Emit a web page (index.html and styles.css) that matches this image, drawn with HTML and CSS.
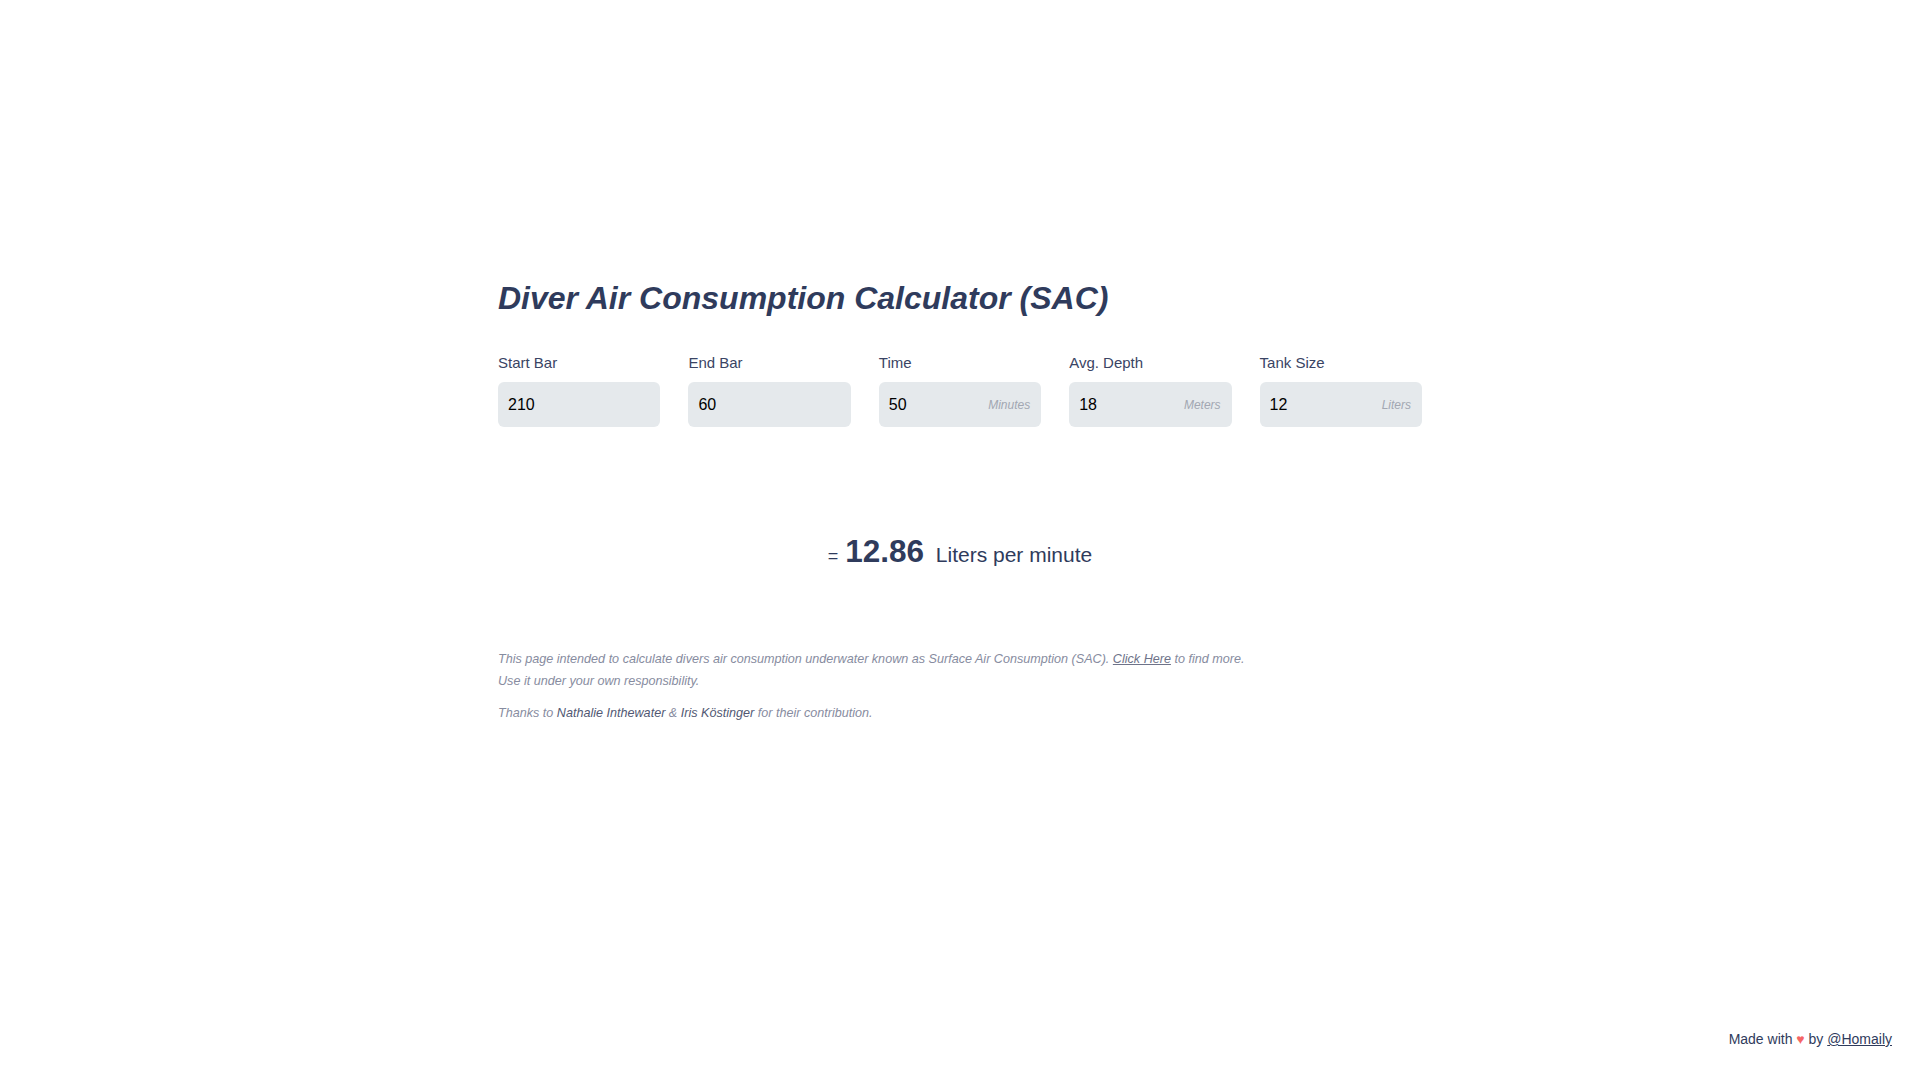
FILE: index.html
```html
<!DOCTYPE html>
<html lang="en">
<head>
    <meta charset="UTF-8">
    <meta name="viewport" content="width=device-width, initial-scale=1.0">
    <title>Diver Air Consumption Calculator (SAC)</title>
    <link rel="stylesheet" href="styles.css">
</head>
<body>
    <div class="page">
        <main class="layout-container">
            <h1 class="title">Diver Air Consumption Calculator (SAC)</h1>

            <div class="fields">
                <div class="field">
                    <label for="start-bar">Start Bar</label>
                    <div class="field-box">
                        <input type="text" inputmode="numeric" class="calc-input" id="start-bar" value="210">
                    </div>
                </div>

                <div class="field">
                    <label for="end-bar">End Bar</label>
                    <div class="field-box">
                        <input type="text" inputmode="numeric" class="calc-input" id="end-bar" value="60">
                    </div>
                </div>

                <div class="field">
                    <label for="time">Time</label>
                    <div class="field-box">
                        <input type="text" inputmode="numeric" class="calc-input" id="time" value="50">
                        <span class="unit">Minutes</span>
                    </div>
                </div>

                <div class="field">
                    <label for="depth">Avg. Depth</label>
                    <div class="field-box">
                        <input type="text" inputmode="numeric" class="calc-input" id="depth" value="18">
                        <span class="unit">Meters</span>
                    </div>
                </div>

                <div class="field">
                    <label for="tank">Tank Size</label>
                    <div class="field-box">
                        <input type="text" inputmode="numeric" class="calc-input" id="tank" value="12">
                        <span class="unit">Liters</span>
                    </div>
                </div>
            </div>

            <div class="result">
                <span class="result-eq">=</span>
                <span class="result-value" id="result">12.86</span>
                <span class="result-unit">Liters per minute</span>
            </div>

            <div class="notes">
                <p>This page intended to calculate divers air consumption underwater known as Surface Air Consumption (SAC). <a href="#">Click Here</a> to find more.<br>Use it under your own responsibility.</p>
                <p>Thanks to <b>Nathalie Inthewater</b> &amp; <b>Iris Köstinger</b> for their contribution.</p>
            </div>
        </main>

        <footer class="footer">
            Made with <span class="heart">&#9829;</span> by <a href="#">@Homaily</a>
        </footer>
    </div>

    <script>
        const resultEl = document.getElementById('result');

        function calculate() {
            let get = id => parseFloat(document.getElementById(id).value);
            let start = get('start-bar');
            let end = get('end-bar');
            let time = get('time');
            let depth = get('depth');
            let tank = get('tank');

            let sac = ((start - end) * tank / time) / (depth / 10 + 1);
            resultEl.innerText = isFinite(sac) ? sac.toFixed(2) : '0';
        }

        for (const input of document.querySelectorAll('.calc-input')) {
            input.oninput = calculate;
        }

        calculate();
    </script>
</body>
</html>
```

FILE: styles.css
```css
* {
    box-sizing: border-box;
}

body {
    margin: 0;
    font-family: "Liberation Sans", Arial, sans-serif;
    color: #2e3a59;
    background: #fff;
}

.page {
    min-height: 100vh;
    display: flex;
    flex-direction: column;
}

.layout-container {
    flex: 1;
    width: 924px;
    margin: 0 auto;
    padding-top: 278px;
}

.title {
    margin: 0;
    font-size: 32px;
    line-height: 40px;
    font-weight: bold;
    font-style: italic;
    color: #2f3b5c;
}

.fields {
    display: grid;
    grid-template-columns: repeat(5, minmax(0, 1fr));
    gap: 28px;
    margin-top: 35px;
}

.field {
    min-width: 0;
}

.field label {
    display: block;
    font-size: 15px;
    line-height: 20px;
    color: #3a4464;
    margin-bottom: 9px;
}

.field-box {
    display: flex;
    align-items: center;
    height: 45px;
    padding: 0 11px 0 10px;
    border-radius: 6px;
    background: #e5e9ec;
}

.calc-input {
    flex: 1;
    width: 100%;
    min-width: 0;
    border: none;
    outline: none;
    background: transparent;
    padding: 0;
    font-family: "Liberation Sans", Arial, sans-serif;
    font-size: 16px;
    color: #000;
}

.unit {
    flex-shrink: 0;
    font-size: 12px;
    font-style: italic;
    color: #a2a7b2;
}

.result {
    margin-top: 108px;
    text-align: center;
    font-size: 21px;
    line-height: 40px;
    color: #2f3b5c;
}

.result-eq {
    font-size: 18px;
    margin-right: 1px;
}

.result-value {
    font-size: 31.5px;
    line-height: 30px;
    font-weight: bold;
    margin-right: 6px;
}

.notes {
    margin-top: 72px;
    font-size: 12.6px;
    line-height: 22px;
    font-style: italic;
    color: #878ca0;
}

.notes p {
    margin: 0 0 10px;
}

.notes a {
    color: #6e7389;
}

.notes b {
    font-weight: normal;
    color: #515873;
}

.footer {
    text-align: right;
    font-size: 14px;
    line-height: 20px;
    padding: 0 28px 31px;
    color: #2f3b5c;
}

.footer a {
    color: #2f3b5c;
}

.heart {
    color: #f56565;
}
```
